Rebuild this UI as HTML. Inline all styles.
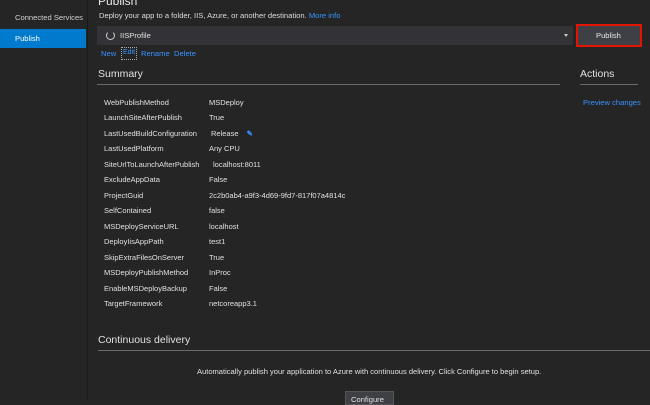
<!DOCTYPE html>
<html><head><style>
body{margin:0;width:650px;height:400px;background:#252526;overflow:hidden;font-family:"Liberation Sans",sans-serif;color:#dcdcdc;position:relative}
.a{position:absolute;white-space:nowrap}
.s{font-size:7.6px}
.l{color:#3794ff}
.row{position:absolute;left:104px;font-size:7.5px;color:#e0e0e0;white-space:nowrap}
.row span{position:absolute;left:105px;white-space:nowrap}
</style></head><body>
<div class="a" style="left:87px;top:0;width:1px;height:400px;background:#1b1b1c"></div>
<div class="a s" style="left:15px;top:13px;color:#d0d0d0">Connected Services</div>
<div class="a" style="left:0;top:29px;width:86px;height:19px;background:#007acc"></div>
<div class="a s" style="left:15px;top:34px;color:#fff">Publish</div>

<div class="a" style="left:98px;top:-6px;font-size:12px;color:#e8e8e8">Publish</div>
<div class="a s" style="left:99px;top:11px">Deploy your app to a folder, IIS, Azure, or another destination. <span class="l">More info</span></div>
<div class="a" style="left:97px;top:26px;width:476px;height:19px;background:#333337"></div>
<div class="a" style="left:106px;top:31px;width:7px;height:7px;border:1px solid #ccc;border-radius:50%;border-top-color:transparent"></div>
<div class="a s" style="left:120px;top:31px;color:#e0e0e0">IISProfile</div>
<div class="a" style="left:564px;top:34px;width:0;height:0;border-left:2.5px solid transparent;border-right:2.5px solid transparent;border-top:3px solid #ccc"></div>
<div class="a" style="left:576px;top:24px;width:62px;height:19px;background:#3f3f46;border:2px solid #e51400"></div>
<div class="a s" style="left:596px;top:31px;color:#e8e8e8">Publish</div>
<div class="a s l" style="left:101px;top:49px">New</div>
<div class="a" style="left:121px;top:47px;width:14px;height:11px;border:1px dotted #aaa"></div>
<div class="a s l" style="left:123px;top:49px;font-size:7px">Edit</div>
<div class="a s l" style="left:141px;top:49px">Rename</div>
<div class="a s l" style="left:174px;top:49px">Delete</div>

<div class="a" style="left:98px;top:68px;font-size:10.5px;color:#e0e0e0">Summary</div>
<div class="a" style="left:97px;top:84px;width:463px;height:1px;background:#6a6a6a"></div>
<div class="a" style="left:580px;top:68px;font-size:10.5px;color:#e0e0e0">Actions</div>
<div class="a" style="left:580px;top:84px;width:58px;height:1px;background:#6a6a6a"></div>
<div class="a s l" style="left:583px;top:98px">Preview changes</div>

<div class="row" style="top:98px">WebPublishMethod<span>MSDeploy</span></div>
<div class="row" style="top:113px">LaunchSiteAfterPublish<span>True</span></div>
<div class="row" style="top:129px">LastUsedBuildConfiguration<span style="left:107px">Release <b style="color:#3794ff;margin-left:6px">&#9998;</b></span></div>
<div class="row" style="top:144px">LastUsedPlatform<span>Any CPU</span></div>
<div class="row" style="top:160px">SiteUrlToLaunchAfterPublish<span style="left:109px">localhost:8011</span></div>
<div class="row" style="top:175px">ExcludeAppData<span>False</span></div>
<div class="row" style="top:191px">ProjectGuid<span>2c2b0ab4-a9f3-4d69-9fd7-817f07a4814c</span></div>
<div class="row" style="top:206px">SelfContained<span>false</span></div>
<div class="row" style="top:222px">MSDeployServiceURL<span>localhost</span></div>
<div class="row" style="top:237px">DeployIisAppPath<span>test1</span></div>
<div class="row" style="top:253px">SkipExtraFilesOnServer<span>True</span></div>
<div class="row" style="top:268px">MSDeployPublishMethod<span>InProc</span></div>
<div class="row" style="top:284px">EnableMSDeployBackup<span>False</span></div>
<div class="row" style="top:299px">TargetFramework<span>netcoreapp3.1</span></div>

<div class="a" style="left:98px;top:334px;font-size:10.5px;color:#e0e0e0">Continuous delivery</div>
<div class="a" style="left:98px;top:350px;width:552px;height:1px;background:#6a6a6a"></div>
<div class="a" style="left:197px;top:367px;font-size:7.55px;color:#e0e0e0">Automatically publish your application to Azure with continuous delivery. Click Configure to begin setup.</div>
<div class="a" style="left:345px;top:391px;width:47px;height:12px;background:#3f3f46;border:1px solid #555"></div>
<div class="a s" style="left:351px;top:395px;color:#e0e0e0">Configure</div>
</body></html>
